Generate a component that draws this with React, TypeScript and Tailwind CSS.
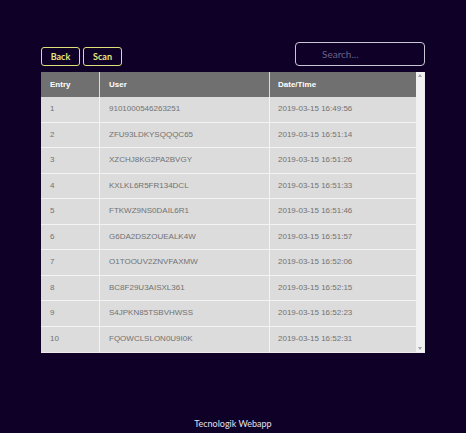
const rows = [
  ["1", "9101000546263251", "2019-03-15 16:49:56"],
  ["2", "ZFU93LDKYSQQQC65", "2019-03-15 16:51:14"],
  ["3", "XZCHJ8KG2PA2BVGY", "2019-03-15 16:51:26"],
  ["4", "KXLKL6R5FR134DCL", "2019-03-15 16:51:33"],
  ["5", "FTKWZ9NS0DAIL6R1", "2019-03-15 16:51:46"],
  ["6", "G6DA2DSZOUEALK4W", "2019-03-15 16:51:57"],
  ["7", "O1TOOUV2ZNVFAXMW", "2019-03-15 16:52:06"],
  ["8", "BC8F29U3AISXL361", "2019-03-15 16:52:15"],
  ["9", "S4JPKN85TSBVHWSS", "2019-03-15 16:52:23"],
  ["10", "FQOWCLSLON0U9I0K", "2019-03-15 16:52:31"],
];

export default function App() {
  return (
    <div className="h-[433px] w-[466px] bg-[#0e0027] relative font-['Lato',sans-serif]">
      <div className="pl-[41px] pt-[42px] w-[425px]">
        {/* toolbar */}
        <div className="flex items-end justify-between">
          <div className="flex gap-[3px]">
            <button className="h-[19px] w-[39px] border border-[#e0e07a] rounded-[3px] text-[9px] text-[#e6e67c] font-bold leading-none">
              Back
            </button>
            <button className="h-[19px] w-[39px] border border-[#e0e07a] rounded-[3px] text-[9px] text-[#e6e67c] font-bold leading-none">
              Scan
            </button>
          </div>
          <input
            placeholder="Search..."
            className="h-[24px] w-[130px] border border-[#c8c8d4] rounded-[4px] bg-transparent pl-[26px] text-[10px] text-white placeholder:text-[#6b6089] outline-none"
          />
        </div>

        {/* table */}
        <div className="mt-[6px] flex border border-[#ececec] border-l-0 border-t-0 font-['Liberation_Sans',Arial,sans-serif] text-[8px]">
          <div className="w-[375px]">
            <div className="grid grid-cols-[59px_170px_1fr] h-[25px] bg-[#707070] text-white font-bold">
              <div className="pl-[9px] flex items-center border-r border-[#dcdcdc]">Entry</div>
              <div className="pl-[9px] flex items-center border-r border-[#dcdcdc]">User</div>
              <div className="pl-[8px] flex items-center">Date/Time</div>
            </div>
            {rows.map((r, i) => (
              <div
                key={r[0]}
                className={`grid grid-cols-[59px_170px_1fr] h-[25.5px] bg-[#dcdcdc] text-[#727272] ${
                  i < rows.length - 1 ? "border-b border-[#f4f4f4]" : ""
                }`}
              >
                <div className="pl-[9px] flex items-center border-r border-[#f4f4f4]">{r[0]}</div>
                <div className="pl-[9px] flex items-center border-r border-[#f4f4f4]">{r[1]}</div>
                <div className="pl-[8px] flex items-center">{r[2]}</div>
              </div>
            ))}
          </div>
          {/* scrollbar */}
          <div className="w-[8px] bg-[#f1f1f1] flex flex-col justify-between items-center py-[2px]">
            <div className="w-0 h-0 border-l-[2px] border-r-[2px] border-b-[3px] border-l-transparent border-r-transparent border-b-[#a3a3a3]" />
            <div className="w-0 h-0 border-l-[2px] border-r-[2px] border-t-[3px] border-l-transparent border-r-transparent border-t-[#a3a3a3]" />
          </div>
        </div>
      </div>

      <div className="absolute bottom-[3px] left-0 right-0 text-center text-[9px] text-[#e2e0ee]">
        Tecnologik Webapp
      </div>
    </div>
  );
}
